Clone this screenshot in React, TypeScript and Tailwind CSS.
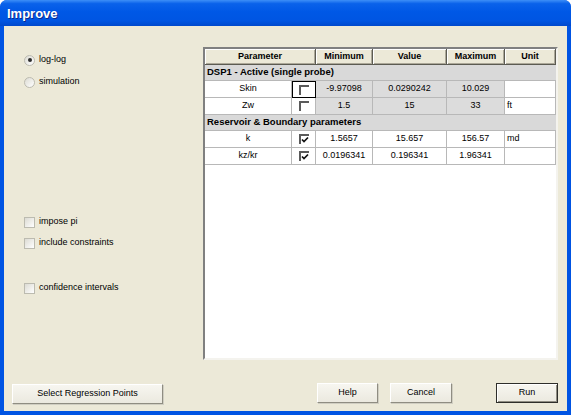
import type { ReactNode } from 'react';

type Shade = 'w' | 'g';

interface DataRow {
  name: string;
  checked: boolean;
  focused?: boolean;
  min: string;
  value: string;
  max: string;
  unit: string;
  shade: Shade;
}

interface Group {
  title: string;
  rows: DataRow[];
}

const groups: Group[] = [
  {
    title: 'DSP1 - Active (single probe)',
    rows: [
      { name: 'Skin', checked: false, focused: true, min: '-9.97098', value: '0.0290242', max: '10.029', unit: '', shade: 'g' },
      { name: 'Zw', checked: false, min: '1.5', value: '15', max: '33', unit: 'ft', shade: 'g' },
    ],
  },
  {
    title: 'Reservoir & Boundary parameters',
    rows: [
      { name: 'k', checked: true, min: '1.5657', value: '15.657', max: '156.57', unit: 'md', shade: 'w' },
      { name: 'kz/kr', checked: true, min: '0.0196341', value: '0.196341', max: '1.96341', unit: '', shade: 'w' },
    ],
  },
];

function XpRadio({ checked, label }: { checked?: boolean; label: string }) {
  return (
    <div className="flex items-center h-[16px] gap-[4px]">
      <span className="w-[11px] h-[11px] rounded-full border border-[#bcbbb0] bg-[linear-gradient(135deg,#dcdbd3,#ffffff)] flex items-center justify-center">
        {checked && <span className="w-[4px] h-[4px] rounded-full bg-[#2c2c2c]" />}
      </span>
      <span>{label}</span>
    </div>
  );
}

function XpCheck({ label }: { label: string }) {
  return (
    <div className="flex items-center h-[16px] gap-[4px]">
      <span className="w-[11px] h-[11px] border border-[#bcbbb0] bg-[linear-gradient(135deg,#dcdbd3,#ffffff)]" />
      <span>{label}</span>
    </div>
  );
}

function CellCheck({ checked }: { checked: boolean }) {
  return (
    <span className="relative w-[10px] h-[10px] bg-white border-t-2 border-l-2 border-t-[#5a5a5a] border-l-[#5a5a5a]">
      {checked && (
        <svg viewBox="0 0 8 8" className="absolute left-[0px] top-[0px] w-[8px] h-[8px]">
          <path d="M1 3.5 L3 5.5 L7 1.5" stroke="#111" strokeWidth="1.7" fill="none" />
        </svg>
      )}
    </span>
  );
}

function Button({ children, width, isDefault }: { children: ReactNode; width: string; isDefault?: boolean }) {
  return (
    <div
      className={`${width} h-[20px] flex items-center justify-center bg-[linear-gradient(to_bottom,#f7f6f0,#ebe9df)] border ${
        isDefault
          ? 'border-[#2e2e2a] shadow-[inset_1px_1px_0_#ffffff,inset_-1px_-1px_0_#8f8d82]'
          : 'border-t-white border-l-white border-r-[#8f8d82] border-b-[#8f8d82] shadow-[1px_1px_0_#d0cec2]'
      }`}
    >
      {children}
    </div>
  );
}

function HeaderCell({ children, span }: { children: ReactNode; span?: boolean }) {
  return (
    <div
      className={`${span ? 'col-span-2' : ''} h-[16px] flex items-center justify-center font-bold bg-[#ece9d8] border-r border-b border-[#5c5b52] shadow-[inset_1px_1px_0_#ffffff,inset_-1px_-1px_0_#aca899]`}
    >
      {children}
    </div>
  );
}

export default function App() {
  return (
    <div className="w-[571px] h-[415px] flex flex-col bg-[#0054e3] rounded-t-[7px] overflow-hidden font-['Liberation_Sans',Arial,sans-serif] text-[9px] text-black">
      {/* Title bar */}
      <div className="h-[26px] flex items-center pl-[7px] pt-[2px] bg-[linear-gradient(to_bottom,#3d8ff7_0%,#0a62ea_14%,#0058e6_45%,#0055e2_80%,#0049cc_100%)]">
        <span className="text-white font-bold text-[13px] [text-shadow:1px_1px_#0c2a8c]">Improve</span>
      </div>

      {/* Client area */}
      <div className="flex-1 mx-[4px] mb-[4px] bg-[#ece9d8] flex flex-col">
        <div className="flex h-[334px]">
          {/* Left options */}
          <div className="w-[199px] pl-[20px] flex flex-col">
            <div className="mt-[26px]">
              <XpRadio checked label="log-log" />
            </div>
            <div className="mt-[6px]">
              <XpRadio label="simulation" />
            </div>
            <div className="mt-[124px]">
              <XpCheck label="impose pi" />
            </div>
            <div className="mt-[5px]">
              <XpCheck label="include constraints" />
            </div>
            <div className="mt-[29px]">
              <XpCheck label="confidence intervals" />
            </div>
          </div>

          {/* Parameter table */}
          <div className="mt-[21px] w-[355px] h-[313px] bg-white border-2 border-t-[#808080] border-l-[#808080] border-r-[#f4f3ee] border-b-[#f4f3ee]">
            <div className="grid grid-cols-[87px_24px_57px_74px_58px_51px]">
              <HeaderCell span>Parameter</HeaderCell>
              <HeaderCell>Minimum</HeaderCell>
              <HeaderCell>Value</HeaderCell>
              <HeaderCell>Maximum</HeaderCell>
              <HeaderCell>Unit</HeaderCell>

              {groups.map((g) => (
                <GroupRows key={g.title} group={g} />
              ))}
            </div>
          </div>
        </div>

        {/* Buttons */}
        <div className="flex mt-[23px]">
          <div className="ml-[8px] mt-[1px]">
            <Button width="w-[151px]">Select Regression Points</Button>
          </div>
          <div className="ml-[154px]">
            <Button width="w-[61px]">Help</Button>
          </div>
          <div className="ml-[12px]">
            <Button width="w-[62px]">Cancel</Button>
          </div>
          <div className="ml-[44px]">
            <Button width="w-[62px]" isDefault>
              Run
            </Button>
          </div>
        </div>
      </div>
    </div>
  );
}

function GroupRows({ group }: { group: Group }) {
  const line = 'border-r border-b border-[#b8b8b8]';
  return (
    <>
      <div className="col-span-6 h-[16px] flex items-center pl-[2px] font-bold text-[9.5px] bg-[#d9d9d9] border-b border-[#b8b8b8]">
        {group.title}
      </div>
      {group.rows.map((r) => {
        const shade = r.shade === 'g' ? 'bg-[#dcdcdc]' : 'bg-white';
        return (
          <div key={r.name} className="contents">
            <div className={`h-[17px] flex items-center justify-center bg-white ${line}`}>{r.name}</div>
            <div
              className={`h-[17px] flex items-center justify-center bg-white ${
                r.focused ? 'border border-black' : line
              }`}
            >
              <CellCheck checked={r.checked} />
            </div>
            <div className={`h-[17px] flex items-center justify-center ${shade} ${line}`}>{r.min}</div>
            <div className={`h-[17px] flex items-center justify-center ${shade} ${line}`}>{r.value}</div>
            <div className={`h-[17px] flex items-center justify-center ${shade} ${line}`}>{r.max}</div>
            <div className={`h-[17px] flex items-center pl-[2px] bg-white ${line}`}>{r.unit}</div>
          </div>
        );
      })}
    </>
  );
}
